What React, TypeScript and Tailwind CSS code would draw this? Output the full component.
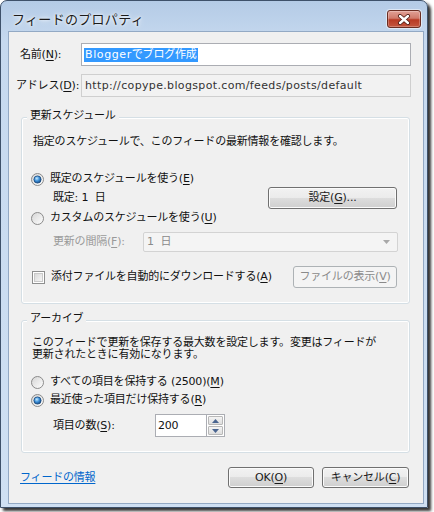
import React from "react";

function U({ c }: { c: string }) {
  return <span className="underline decoration-1 underline-offset-[2px]">{c}</span>;
}

function Radio({ checked, id }: { checked?: boolean; id: string }) {
  return (
    <svg width="13" height="13" viewBox="0 0 13 13" className="shrink-0">
      <defs>
        <linearGradient id={`rg${id}`} x1="0" y1="0" x2="1" y2="1">
          <stop offset="0" stopColor="#d4d4d4" />
          <stop offset="1" stopColor="#ffffff" />
        </linearGradient>
        <radialGradient id={`dg${id}`} cx="0.4" cy="0.35" r="0.75">
          <stop offset="0" stopColor="#c6eaff" />
          <stop offset="0.45" stopColor="#3f93db" />
          <stop offset="1" stopColor="#0d3a73" />
        </radialGradient>
      </defs>
      <circle cx="6.5" cy="6.5" r="6" fill={`url(#rg${id})`} stroke="#8a8a8a" />
      {checked && (
        <circle cx="6.5" cy="6.5" r="3.6" fill={`url(#dg${id})`} stroke="#17477c" strokeWidth="0.8" />
      )}
    </svg>
  );
}

function Check() {
  return (
    <svg width="13" height="13" viewBox="0 0 13 13" className="shrink-0">
      <defs>
        <linearGradient id="cbg" x1="0" y1="0" x2="1" y2="1">
          <stop offset="0" stopColor="#d8d8d8" />
          <stop offset="1" stopColor="#f7f7f7" />
        </linearGradient>
      </defs>
      <rect x="0.5" y="0.5" width="12" height="12" fill="#fff" stroke="#8e8f8f" />
      <rect x="2.5" y="2.5" width="8" height="8" fill="url(#cbg)" stroke="#c9c9c9" />
    </svg>
  );
}

const btn =
  "flex items-center justify-center rounded-[3px] border border-[#707070] bg-[linear-gradient(#f2f2f2_0%,#ebebeb_50%,#dddddd_50%,#cfcfcf_100%)] shadow-[inset_0_0_0_1px_#fbfbfb] text-[#1a1a1a]";
const btnDisabled =
  "flex items-center justify-center rounded-[3px] border border-[#adb2b5] bg-[#f4f4f4] text-[#8a8a8a]";

export default function App() {
  return (
    <div className="w-[434px] h-[512px] bg-white font-['DejaVu_Sans','Noto_Sans_CJK_JP',sans-serif] text-[11px] leading-[14px] tracking-[-0.2px] text-[#111]">
      <div className="w-[428px] h-[508px] flex flex-col rounded-t-[7px] border border-[#3e516a] bg-[linear-gradient(#b4cbe6,#c6d9ef_40px,#cfe0f3)] shadow-[3px_3px_3px_rgba(0,0,0,0.8)]">
        {/* title bar */}
        <div className="h-[30px] flex items-start pt-[9px] pl-[11px] pr-[6px]">
          <div className="h-[18px] flex items-center text-[13px] tracking-[0.3px] text-[#1b1b1b] font-['Noto_Sans_CJK_JP',sans-serif] [text-shadow:0_0_6px_#fff,0_0_3px_#fff]">
            フィードのプロパティ
          </div>
          <div className="ml-auto w-[34px] h-[18px] rounded-[3px] border border-[#6b2d22] bg-[linear-gradient(#e1a196_0%,#d07a6b_45%,#b83a24_55%,#c4563f_100%)] shadow-[0_0_0_1px_rgba(255,255,255,0.5),inset_0_0_0_1px_rgba(255,255,255,0.25)] flex items-center justify-center">
            <svg width="14" height="11" viewBox="0 0 14 11">
              <path d="M3 2 L11 9 M11 2 L3 9" stroke="#4a1810" strokeWidth="4" strokeLinecap="round" />
              <path d="M3 2 L11 9 M11 2 L3 9" stroke="#ffffff" strokeWidth="2.4" strokeLinecap="round" />
            </svg>
          </div>
        </div>

        {/* client */}
        <div className="ml-[7px] mr-[3px] mb-[3px] flex-1 border border-[#93a9c4] bg-[#f0f0f0] flex flex-col pt-[11px]">
          {/* name */}
          <div className="flex h-[23px]">
            <div className="w-[72px] pl-[11px] flex items-center">
              名前(<U c="N" />):
            </div>
            <div className="w-[330px] border border-[#abadb3] bg-white flex items-center pl-[2px]">
              <span className="bg-[#3399ff] text-white h-[14px] leading-[14px] px-[1px]">
                <span className="tracking-[0.6px]">Blogger</span>でブログ作成
              </span>
            </div>
          </div>
          {/* address */}
          <div className="flex h-[23px] mt-[8px]">
            <div className="w-[72px] pl-[7px] flex items-center">
              アドレス(<U c="D" />):
            </div>
            <div className="w-[330px] border border-[#cfcfcf] bg-[#f2f2f2] flex items-center pl-[3px] text-[#333] tracking-[0.35px]">
              http://copype.blogspot.com/feeds/posts/default
            </div>
          </div>

          {/* group 1 */}
          <div className="relative ml-[12px] w-[389px] mt-[20px] h-[187px] border border-[#d5dfe5] rounded-[3px] shadow-[inset_0_0_0_1px_#fff] flex flex-col">
            <div className="absolute -top-[9px] left-[5px] px-[3px] bg-[#f0f0f0] leading-[14px]">更新スケジュール</div>
            <div className="mt-[16px] h-[16px] pl-[11px] flex items-center">
              指定のスケジュールで、このフィードの最新情報を確認します。
            </div>
            <div className="mt-[21px] h-[16px] pl-[9px] flex items-center gap-[6px]">
              <Radio checked id="a" />
              <span>既定のスケジュールを使う(<U c="E" />)</span>
            </div>
            <div className="h-[22px] flex items-center pl-[31px] pr-[12px]">
              <span className="whitespace-pre">既定: 1  日</span>
              <div className={`${btn} ml-auto w-[129px] h-[22px]`}>
                設定(<U c="G" />)...
              </div>
            </div>
            <div className="mt-[1px] h-[16px] pl-[9px] flex items-center gap-[6px]">
              <Radio id="b" />
              <span>カスタムのスケジュールを使う(<U c="U" />)</span>
            </div>
            <div className="mt-[6px] h-[20px] flex items-center pl-[31px]">
              <span className="w-[90px] text-[#9a9a9a]">
                更新の間隔(<U c="F" />):
              </span>
              <div className="w-[255px] h-[20px] rounded-[2px] border border-[#d3d3d3] bg-[#f4f4f4] flex items-center pl-[3px] pr-[7px] text-[#8a8a8a]">
                <span className="whitespace-pre">1  日</span>
                <svg width="7" height="4" viewBox="0 0 7 4" className="ml-auto">
                  <path d="M0 0 L7 0 L3.5 4 Z" fill="#a8a8a8" />
                </svg>
              </div>
            </div>
            <div className="mt-[14px] h-[22px] flex items-center pl-[10px] pr-[12px]">
              <Check />
              <span className="ml-[6px]">
                添付ファイルを自動的にダウンロードする(<U c="A" />)
              </span>
              <div className={`${btnDisabled} ml-auto w-[104px] h-[22px]`}>
                ファイルの表示(<U c="V" />)
              </div>
            </div>
          </div>

          {/* group 2 */}
          <div className="relative ml-[12px] w-[389px] mt-[16px] h-[133px] border border-[#d5dfe5] rounded-[3px] shadow-[inset_0_0_0_1px_#fff] flex flex-col">
            <div className="absolute -top-[9px] left-[5px] px-[3px] bg-[#f0f0f0] leading-[14px]">アーカイブ</div>
            <div className="mt-[16px] pl-[10px] leading-[12px]">
              <div className="h-[12px]">このフィードで更新を保存する最大数を設定します。変更はフィードが</div>
              <div className="h-[12px]">更新されたときに有効になります。</div>
            </div>
            <div className="mt-[13px] h-[16px] pl-[9px] flex items-center gap-[6px]">
              <Radio id="c" />
              <span>すべての項目を保持する (2500)(<U c="M" />)</span>
            </div>
            <div className="mt-[2px] h-[16px] pl-[9px] flex items-center gap-[6px]">
              <Radio checked id="d" />
              <span>最近使った項目だけ保持する(<U c="R" />)</span>
            </div>
            <div className="mt-[6px] h-[23px] flex items-center pl-[31px]">
              <span className="w-[102px]">
                項目の数(<U c="S" />):
              </span>
              <div className="w-[52px] h-[23px] border border-[#abadb3] bg-white flex items-center pl-[2px]">200</div>
              <div className="w-[18px] h-[23px] flex flex-col border border-l-0 border-[#abadb3] bg-white p-[1px] gap-[1px]">
                <div className="flex-1 rounded-[1px] border border-[#b8b8b8] bg-[linear-gradient(#f4f4f4,#dedede)] flex items-center justify-center">
                  <svg width="7" height="4" viewBox="0 0 7 4">
                    <path d="M0 4 L7 4 L3.5 0 Z" fill="#4a6590" />
                  </svg>
                </div>
                <div className="flex-1 rounded-[1px] border border-[#b8b8b8] bg-[linear-gradient(#f4f4f4,#dedede)] flex items-center justify-center">
                  <svg width="7" height="4" viewBox="0 0 7 4">
                    <path d="M0 0 L7 0 L3.5 4 Z" fill="#4a6590" />
                  </svg>
                </div>
              </div>
            </div>
          </div>

          {/* bottom */}
          <div className="mt-[14px] h-[21px] flex items-center pl-[11px] pr-[14px]">
            <span className="text-[#0066cc] underline underline-offset-[2px]">フィードの情報</span>
            <div className={`${btn} ml-auto w-[86px] h-[21px] border-[#3c7fb1] shadow-[inset_0_0_0_1px_#bfe4f8]`}>
              OK(<U c="O" />)
            </div>
            <div className={`${btn} ml-[8px] w-[87px] h-[21px]`}>
              キャンセル(<U c="C" />)
            </div>
          </div>
        </div>
      </div>
    </div>
  );
}
